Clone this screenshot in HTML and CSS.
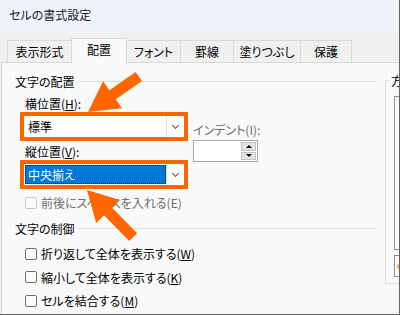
FILE: index.html
```html
<!DOCTYPE html>
<html lang="ja">
<head>
    <meta charset="UTF-8">
    <title>セルの書式設定</title>
    <link rel="stylesheet" href="styles.css">
</head>
<body>
    <div class="window">
        <div class="titlebar">セルの書式設定</div>
        <div class="tabs">
            <div class="tab t1">表示形式</div>
            <div class="tab t2 active">配置</div>
            <div class="tab t3">フォント</div>
            <div class="tab t4">罫線</div>
            <div class="tab t5">塗りつぶし</div>
            <div class="tab t6">保護</div>
        </div>
        <div class="panel">
            <div class="main">
                <div class="group-title"><span>文字の配置</span><i class="rule"></i></div>
                <div class="align-block">
                    <div class="align-col">
                        <div class="label">横位置(<u>H</u>):</div>
                        <div class="mark">
                            <div class="combo">
                                <span class="combo-text">標準</span>
                                <span class="combo-btn"><i class="chev"></i></span>
                            </div>
                        </div>
                        <div class="label label-v">縦位置(<u>V</u>):</div>
                        <div class="mark">
                            <div class="combo">
                                <span class="combo-text"><span class="selected">中央揃え</span></span>
                                <span class="combo-btn"><i class="chev"></i></span>
                            </div>
                        </div>
                    </div>
                    <div class="indent-col">
                        <div class="label dim">インデント(I):</div>
                        <div class="spin">
                            <span class="spin-field"></span>
                            <span class="spin-btns">
                                <b class="up"><i></i></b>
                                <b class="down"><i></i></b>
                            </span>
                        </div>
                    </div>
                </div>
                <div class="check disabled"><span class="box"></span>前後にスペースを入れる(E)</div>

                <div class="group-title second"><span>文字の制御</span><i class="rule"></i></div>
                <div class="checks">
                    <div class="check"><span class="box"></span>折り返して全体を表示する(<u>W</u>)</div>
                    <div class="check"><span class="box"></span>縮小して全体を表示する(<u>K</u>)</div>
                    <div class="check"><span class="box"></span>セルを結合する(<u>M</u>)</div>
                </div>
            </div>
            <fieldset class="orient">
                <legend>方向</legend>
                <div class="preview"></div>
                <div class="preview-small"><span class="dot"></span></div>
            </fieldset>
        </div>

        <!-- 注釈の矢印 -->
        <svg class="arrows" width="400" height="315" viewBox="0 0 400 315">
            <polygon transform="translate(88 112) rotate(-35)" points="0,0 30,-16.5 30,-5.5 62,-5.5 62,5.5 30,5.5 30,16.5"/>
            <polygon transform="translate(87 190) rotate(45.6)" points="0,0 30,-16.5 30,-5.5 66,-5.5 66,5.5 30,5.5 30,16.5"/>
        </svg>
    </div>
</body>
</html>
```

FILE: styles.css
```css
body {
    margin: 0;
    font-family: "Noto Sans CJK JP", "Noto Sans", sans-serif;
    font-size: 12px;
    font-feature-settings: "palt";
    color: #000;
}
.window {
    position: relative;
    width: 400px;
    height: 315px;
    box-sizing: border-box;
    border-right: 1px solid #626262;
    border-bottom: 1px solid #626262;
    background: #f0f0f0;
    overflow: hidden;
}
.titlebar {
    height: 32px;
    padding-left: 9px;
    line-height: 30px;
    background: #eef2f9;
    color: #1a1a1a;
}

/* タブ */
.tabs {
    display: flex;
    align-items: flex-end;
    height: 24px;
    margin-top: 6px;
    padding-left: 7px;
}
.tab {
    height: 22px;
    box-sizing: border-box;
    border-top: 1px solid #d9d9d9;
    border-left: 1px solid #d9d9d9;
    text-align: center;
    line-height: 21px;
}
.tab:last-child { border-right: 1px solid #d9d9d9; }
.tab.active {
    position: relative;
    z-index: 1;
    height: 25px;
    margin-bottom: -1px;
    padding-bottom: 2px;
    border-right: 1px solid #d9d9d9;
    background: #f9f9f9;
}
.tab.active + .tab { border-left: 0; }
.t1 { width: 64px; }
.t2 { width: 56px; }
.t3 { width: 53px; }
.t4 { width: 53px; }
.t5 { width: 67px; }
.t6 { width: 52px; }

.panel {
    display: flex;
    align-items: flex-start;
    height: 252px;
    margin-left: 1px;
    padding: 10px 0 0 13px;
    border-top: 1px solid #d9d9d9;
    border-left: 1px solid #d4d4d4;
    background: #f9f9f9;
}
.main {
    flex: none;
    width: 361px;
}
.group-title {
    display: flex;
    align-items: center;
    height: 17px;
    line-height: 17px;
}
.group-title .rule {
    flex: 1;
    height: 1px;
    margin-left: 3px;
    background: #dcdcdc;
}
.group-title.second { margin-top: 8.5px; }

.label {
    padding-left: 5px;
    line-height: 17px;
}
.label.dim, .check.disabled { color: #6d6d6d; }
.label-v { margin-top: 2px; }

.align-block {
    display: flex;
    margin-top: 5px;
    padding-left: 5px;
}
.align-col { width: 168px; }
.mark {
    box-sizing: border-box;
    width: 168px;
    height: 29px;
    border: 4px solid #ff6600;
}
.combo {
    display: flex;
    height: 21px;
    background: #fff;
}
.combo-text {
    flex: 1;
    padding-left: 4px;
    line-height: 21px;
}
.combo-text .selected {
    display: block;
    height: 19px;
    margin: 1px 0 1px -3px;
    padding-left: 3px;
    line-height: 19px;
    background: #0078d7;
    color: #fff;
    outline: 1px dotted #222;
    outline-offset: -1px;
}
.combo-btn {
    display: flex;
    align-items: center;
    justify-content: center;
    width: 17px;
    border-left: 1px solid #dedede;
}
.chev {
    width: 4px;
    height: 4px;
    margin-top: -3px;
    border-right: 1px solid #555;
    border-bottom: 1px solid #555;
    transform: rotate(45deg);
}

.indent-col {
    margin: 26px 0 0 5px;
}
.indent-col .label { padding-left: 0; }
.spin {
    display: flex;
    box-sizing: border-box;
    width: 65px;
    height: 22px;
    margin-top: 2px;
    padding: 1px;
    border: 1px solid #a8a8a8;
    background: #fff;
}
.spin-field { flex: 1; }
.spin-btns {
    display: flex;
    flex-direction: column;
    gap: 1px;
    width: 15px;
}
.spin-btns b {
    display: flex;
    flex: 1;
    align-items: center;
    justify-content: center;
    background: #e3e3e3;
    border: 1px solid #c4c4c4;
}
.spin-btns .up i {
    border-left: 3px solid transparent;
    border-right: 3px solid transparent;
    border-bottom: 3px solid #000;
}
.spin-btns .down i {
    border-left: 3px solid transparent;
    border-right: 3px solid transparent;
    border-top: 3px solid #000;
}

.check {
    display: flex;
    align-items: center;
    padding-left: 10px;
    line-height: 17px;
}
.check .box {
    box-sizing: border-box;
    width: 12px;
    height: 12px;
    margin-right: 4px;
    border: 1px solid #6f6f6f;
    border-radius: 2px;
    background: #fdfdfd;
}
.check.disabled {
    margin-top: 5px;
}
.check.disabled .box { border-color: #c8c8c8; }
.checks {
    display: flex;
    flex-direction: column;
    gap: 6.5px;
    margin-top: 8.5px;
}

/* 方向 */
.orient {
    flex: none;
    box-sizing: border-box;
    width: 60px;
    height: 212px;
    margin: -1px 0 0 9px;
    padding: 7px 0 0 3px;
    border: 1px solid #dcdcdc;
    border-right: 0;
}
.orient legend {
    padding: 0 2px;
    line-height: 17px;
    white-space: nowrap;
}
.preview {
    height: 154px;
    margin-left: 5px;
    box-sizing: border-box;
    border: 1px solid #8a9199;
    border-right: 0;
}
.preview-small {
    display: flex;
    align-items: center;
    height: 22px;
    margin: 5px 0 0 5px;
    box-sizing: border-box;
    border: 1px solid #8a9199;
    border-right: 0;
}
.dot {
    width: 5px;
    height: 5px;
    margin-left: 2px;
    border-radius: 50%;
    background: #f2a23a;
}

.arrows {
    position: absolute;
    top: 0;
    left: 0;
    fill: #ff6600;
}
```
